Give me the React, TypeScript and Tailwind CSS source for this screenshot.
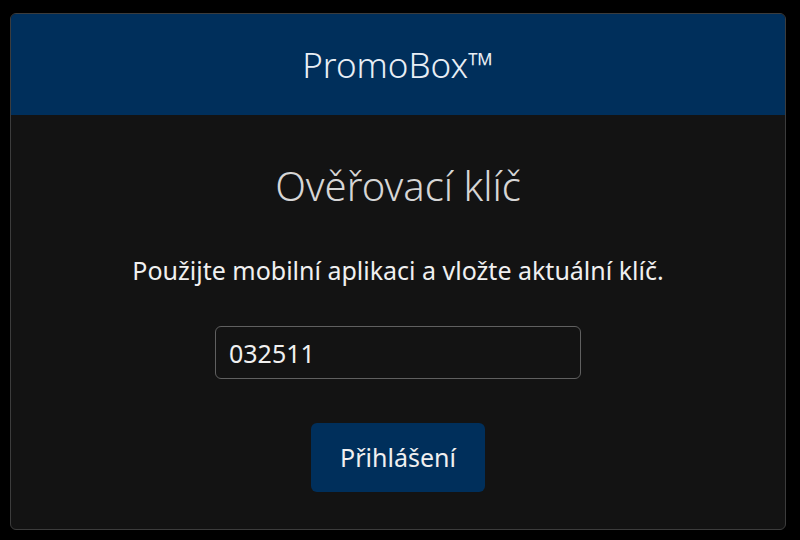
import React from "react";

const font = { fontFamily: '"Noto Sans", "Open Sans", sans-serif' };

export default function App() {
  return (
    <div className="w-[800px] h-[540px] bg-black pt-[13px] pl-[10px]" style={font}>
      <div className="w-[776px] h-[517px] border border-[#3c3c3c] rounded-[6px] overflow-hidden bg-[#131313] flex flex-col">
        <header className="h-[101px] shrink-0 bg-[#002f5b] flex items-center justify-center">
          <h1 className="text-[35px] font-light text-[#e8eef5] leading-[44px]">PromoBox™</h1>
        </header>
        <main className="flex flex-col items-center">
          <h2 className="mt-[46px] text-[40px] font-light text-[#d6d6d6] leading-[50px]">Ověřovací klíč</h2>
          <p className="mt-[43px] text-[25px] text-[#f0f0f0] leading-[32px]">
            Použijte mobilní aplikaci a vložte aktuální klíč.
          </p>
          <input
            className="mt-[40px] w-[366px] h-[53px] rounded-[6px] border-[1.5px] border-[#606060] bg-[#131313] px-[13px] text-[25px] text-[#f0f0f0] outline-none"
            style={font}
            defaultValue="032511"
          />
          <button
            className="mt-[44px] w-[174px] h-[69px] rounded-[6px] bg-[#002f5b] text-[25px] text-[#f0f0f0]"
            style={font}
          >
            Přihlášení
          </button>
        </main>
      </div>
    </div>
  );
}
